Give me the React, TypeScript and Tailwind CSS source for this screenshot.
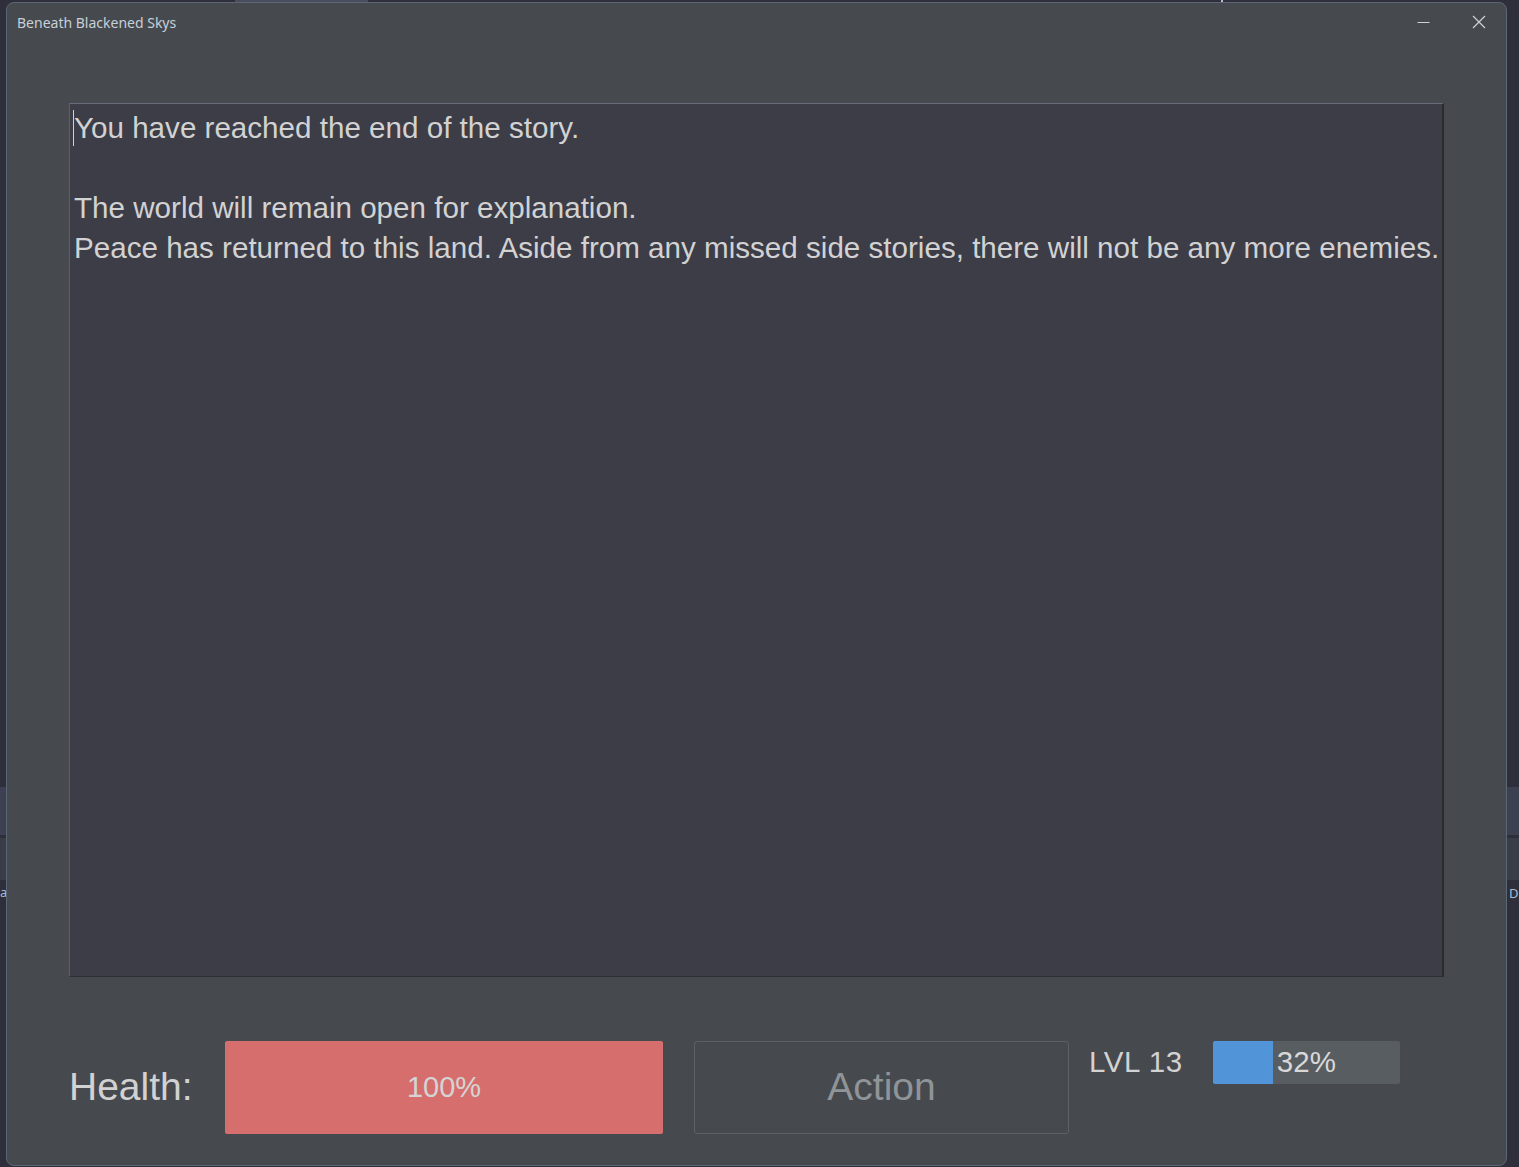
import React from "react";

export default function App() {
  return (
    <div className="relative w-[1519px] h-[1167px] overflow-hidden bg-[#2f2f3b]" style={{ fontFamily: '"Liberation Sans", Arial, sans-serif' }}>
      {/* desktop pieces peeking behind the window */}
      <div className="absolute left-[235px] top-0 w-[133px] h-[2px] bg-[#4a4e5c]" />
      <div className="absolute left-[1221px] top-0 w-[2px] h-[3px] bg-[#b8b8d8]" />
      <div className="absolute left-0 top-[787px] w-[6px] h-[48px] bg-[#3d4050]" />
      <div className="absolute left-0 top-[838px] w-[6px] h-[42px] bg-[#3a3c48]" />
      <div className="absolute right-0 top-[787px] w-[12px] h-[48px] bg-[#3d4050]" />
      <div className="absolute right-0 top-[838px] w-[12px] h-[42px] bg-[#3a3c48]" />
      <div className="absolute left-0 top-[886px] text-[13px] leading-none text-[#a9bcd6]" style={{ fontFamily: '"Noto Sans", sans-serif' }}>a</div>
      <div className="absolute left-[1509px] top-[887px] text-[13px] leading-none text-[#a9bcd6]" style={{ fontFamily: '"Noto Sans", sans-serif' }}>D</div>

      {/* window */}
      <div className="absolute left-[6px] top-[2px] w-[1501px] h-[1164px] rounded-[8px] border border-[#5b6677] bg-[#46494d] flex flex-col">
        {/* title bar */}
        <div className="h-[38px] flex items-center pl-[10px] pr-[20px]">
          <span className="text-[14px] text-[#c7d0da]" style={{ fontFamily: '"Noto Sans", sans-serif' }}>Beneath Blackened Skys</span>
          <div className="ml-auto flex items-center gap-[42px]">
            <svg width="13" height="13" viewBox="0 0 13 13">
              <line x1="0.5" y1="6.5" x2="12.5" y2="6.5" stroke="#cfd3d8" strokeWidth="1" />
            </svg>
            <svg width="14" height="14" viewBox="0 0 14 14">
              <path d="M1 1 L13 13 M13 1 L1 13" stroke="#cfd3d8" strokeWidth="1.2" />
            </svg>
          </div>
        </div>

        {/* text area */}
        <div className="mt-[62px] mx-[62px] h-[874px] bg-[#3d3d48] border-t border-l border-t-[#6b6b7e] border-l-[#5d5d6e] border-r-2 border-b border-r-[#2a2a31] border-b-[#2e2e35] relative">
          <div className="absolute left-[3px] top-[6px] w-px h-[36px] bg-[#d0d0d0]" />
          <div className="pl-[4px] pt-[4px] text-[29.6px] leading-[40px] text-[#d2d2d2] whitespace-pre">
            <div>You have reached the end of the story.</div>
            <div>&nbsp;</div>
            <div>The world will remain open for explanation.</div>
            <div>Peace has returned to this land. Aside from any missed side stories, there will not be any more enemies.</div>
          </div>
        </div>

        {/* bottom row */}
        <div className="mt-[64px] ml-[62px] flex items-start">
          <div className="h-[93px] w-[156px] flex items-center text-[39px] text-[#d2d2d2]">Health:</div>
          <div className="h-[93px] w-[438px] rounded-[2px] bg-[#d76e6e] flex items-center justify-center text-[29px] text-[#d4d4d4]">100%</div>
          <button className="ml-[31px] h-[93px] w-[375px] rounded-[3px] border border-[#5d6165] flex items-center justify-center text-[39px] text-[#8f9498]">Action</button>
          <div className="ml-[20px] w-[124px] h-[43px] flex items-center text-[29.5px] tracking-[0.6px] text-[#d2d2d2]">LVL 13</div>
          <div className="relative w-[187px] h-[43px] rounded-[2px] bg-[#585d61] overflow-hidden flex items-center">
            <div className="h-full bg-[#5294d8]" style={{ width: "32%" }} />
            <span className="ml-[4px] text-[29.5px] text-[#d8d8d8]">32%</span>
          </div>
        </div>
      </div>
    </div>
  );
}
